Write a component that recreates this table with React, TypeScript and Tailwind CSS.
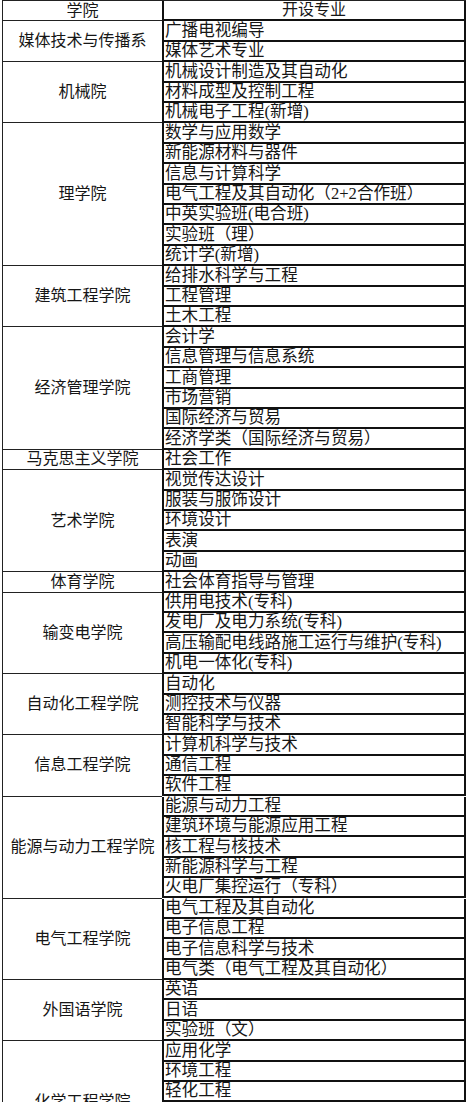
const groups: { name: string; majors: string[] }[] = [
  { name: "媒体技术与传播系", majors: ["广播电视编导", "媒体艺术专业"] },
  {
    name: "机械院",
    majors: ["机械设计制造及其自动化", "材料成型及控制工程", "机械电子工程(新增)"],
  },
  {
    name: "理学院",
    majors: [
      "数学与应用数学",
      "新能源材料与器件",
      "信息与计算科学",
      "电气工程及其自动化（2+2合作班）",
      "中英实验班(电合班)",
      "实验班（理）",
      "统计学(新增)",
    ],
  },
  { name: "建筑工程学院", majors: ["给排水科学与工程", "工程管理", "土木工程"] },
  {
    name: "经济管理学院",
    majors: [
      "会计学",
      "信息管理与信息系统",
      "工商管理",
      "市场营销",
      "国际经济与贸易",
      "经济学类（国际经济与贸易）",
    ],
  },
  { name: "马克思主义学院", majors: ["社会工作"] },
  {
    name: "艺术学院",
    majors: ["视觉传达设计", "服装与服饰设计", "环境设计", "表演", "动画"],
  },
  { name: "体育学院", majors: ["社会体育指导与管理"] },
  {
    name: "输变电学院",
    majors: [
      "供用电技术(专科)",
      "发电厂及电力系统(专科)",
      "高压输配电线路施工运行与维护(专科)",
      "机电一体化(专科)",
    ],
  },
  { name: "自动化工程学院", majors: ["自动化", "测控技术与仪器", "智能科学与技术"] },
  { name: "信息工程学院", majors: ["计算机科学与技术", "通信工程", "软件工程"] },
  {
    name: "能源与动力工程学院",
    majors: [
      "能源与动力工程",
      "建筑环境与能源应用工程",
      "核工程与核技术",
      "新能源科学与工程",
      "火电厂集控运行（专科）",
    ],
  },
  {
    name: "电气工程学院",
    majors: [
      "电气工程及其自动化",
      "电子信息工程",
      "电子信息科学与技术",
      "电气类（电气工程及其自动化）",
    ],
  },
  { name: "外国语学院", majors: ["英语", "日语", "实验班（文）"] },
  {
    name: "化学工程学院",
    majors: ["应用化学", "环境工程", "轻化工程", "化学工程与工艺", "制药工程", "材料化学"],
  },
];

const ROW = 20.4;

export default function App() {
  return (
    <div
      className="w-[469px] h-[1102px] overflow-hidden bg-white pl-[2px] text-[#161616]"
      style={{ fontFamily: '"Liberation Serif", "Noto Sans CJK SC", serif' }}
    >
      <div className="w-[464px] border-t border-[#222]">
        <div className="flex h-[20.4px]">
          <div className="w-[160px] border-l border-b border-[#222] flex items-center justify-center text-[16px] leading-none">
            学院
          </div>
          <div className="flex-1 border-l-2 border-r-2 border-b-2 border-[#111] flex items-center justify-center text-[16px] leading-none">
            开设专业
          </div>
        </div>
        {groups.map((g) => (
          <div key={g.name} className="flex">
            <div
              className="w-[160px] border-l border-b border-[#222] flex items-center justify-center text-[16px] leading-none whitespace-nowrap"
              style={{ height: g.majors.length * ROW }}
            >
              {g.name}
            </div>
            <div className="flex-1 flex flex-col">
              {g.majors.map((m) => (
                <div
                  key={m}
                  className="h-[20.4px] border-l-2 border-r-2 border-b-2 border-[#111] flex items-end pl-[1px] text-[16.6px] leading-[19px] whitespace-nowrap"
                >
                  {m}
                </div>
              ))}
            </div>
          </div>
        ))}
      </div>
    </div>
  );
}
